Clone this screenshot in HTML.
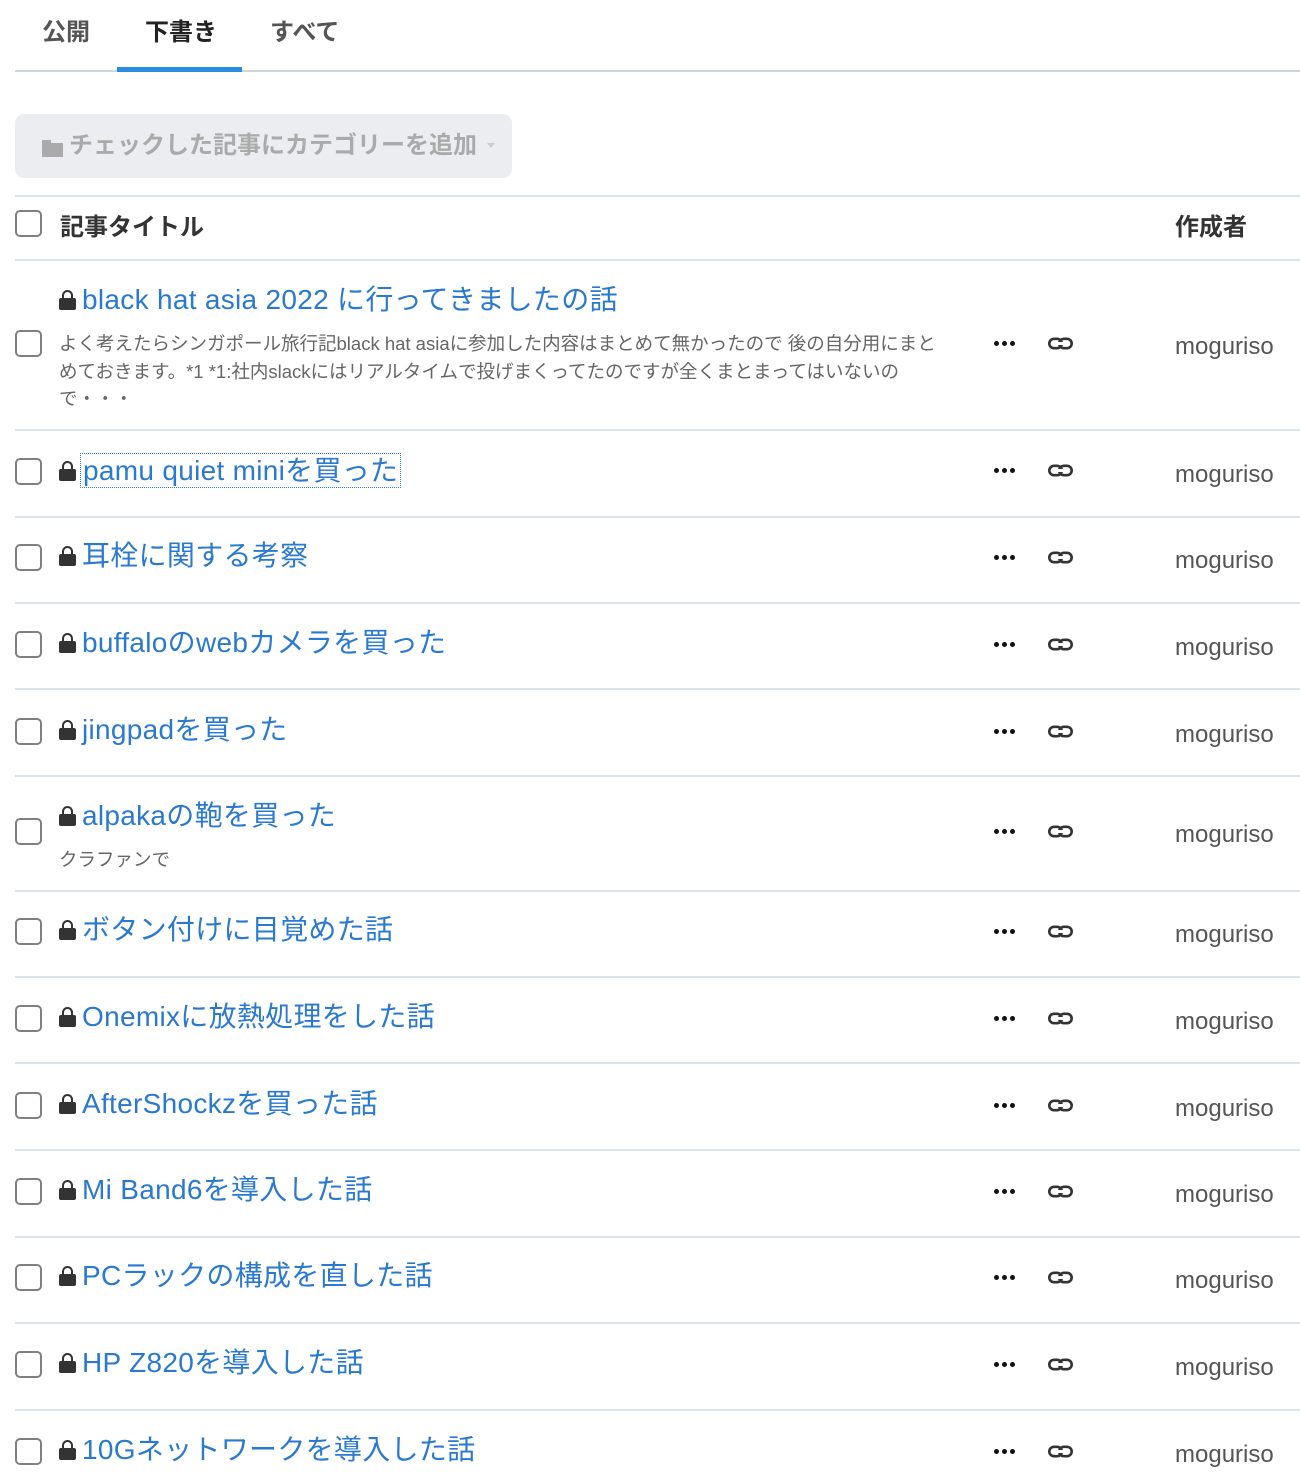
<!DOCTYPE html>
<html><head><meta charset="utf-8"><style>
*{margin:0;padding:0;box-sizing:border-box}
body{width:1300px;height:1482px;background:#fff;position:relative;overflow:hidden;font-family:"Liberation Sans","Noto Sans CJK JP",sans-serif;}
.a{position:absolute;white-space:nowrap}
.tab{font-size:24px;font-weight:bold;color:#555;top:17px;line-height:32px}
.sep{position:absolute;left:15px;width:1285px;height:2px;background:#dde3ea}
.cb{position:absolute;left:15px;width:27px;height:27px;border:2px solid #808080;border-radius:5px;background:#fff}
.t{position:absolute;left:59px;font-size:28px;line-height:36px;color:#2a79d0;white-space:nowrap;letter-spacing:0.3px}
.lk{display:inline-block;width:17px;height:20px;position:relative;margin-right:6px;vertical-align:-1px}
.lk:before{content:"";position:absolute;left:3px;top:0;width:7px;height:9px;border:2.5px solid #333;border-bottom:none;border-radius:6px 6px 0 0}
.lk:after{content:"";position:absolute;left:0;top:8px;width:17px;height:12px;background:#333;border-radius:2px}
.dots{position:absolute;left:994px;width:24px;height:6px}
.dots i{position:absolute;top:0;width:5px;height:5px;border-radius:50%;background:#111}
.link{position:absolute;left:1048px;width:25px;height:13px}
.au{position:absolute;left:1175px;font-size:24px;line-height:30px;color:#555}
.d{position:absolute;left:59px;font-size:18.5px;line-height:27.5px;color:#666;white-space:nowrap}
</style></head><body>
<div class="a tab" style="left:42px">公開</div>
<div class="a tab" style="left:145px;color:#222">下書き</div>
<div class="a tab" style="left:270px">すべて</div>
<div class="sep" style="top:70px;height:2px;background:#cfd6de"></div>
<div class="a" style="left:117px;top:67px;width:125px;height:5px;background:#2a8be0"></div>
<div class="a" style="left:15px;top:114px;width:497px;height:64px;background:#ebedf0;border-radius:9px"></div>
<div class="a" style="left:42px;top:140px;width:21px;height:17px;"><div style="position:absolute;left:0;top:0;width:9px;height:4px;background:#aaa;border-radius:1px"></div><div style="position:absolute;left:0;top:3px;width:21px;height:14px;background:#aaa"></div></div>
<div class="a" style="left:69px;top:129px;font-size:24px;line-height:34px;color:#aaa;font-weight:bold">チェックした記事にカテゴリーを追加</div>
<div class="a" style="left:487px;top:143px;width:0;height:0;border-left:4px solid transparent;border-right:4px solid transparent;border-top:5px solid #ccc"></div>
<div class="sep" style="top:195px"></div>
<div class="cb" style="top:210px"></div>
<div class="a" style="left:60px;top:212px;font-size:24px;line-height:32px;font-weight:bold;color:#333">記事タイトル</div>
<div class="a" style="left:1175px;top:212px;font-size:24px;line-height:32px;font-weight:bold;color:#333">作成者</div>
<div class="sep" style="top:259px"></div>

<div id="rows"></div>
<script>
const rows=[
[430,300,343,344,347,"black hat asia 2022 に行ってきましたの話",["よく考えたらシンガポール旅行記black hat asiaに参加した内容はまとめて無かったので 後の自分用にまと","めておきます。*1 *1:社内slackにはリアルタイムで投げまくってたのですが全くまとまってはいないの","で・・・"]],
[517,471,471,471,475,"pamu quiet miniを買った"],
[603,556,557,558,561,"耳栓に関する考察"],
[689,643,644,645,648,"buffaloのwebカメラを買った"],
[776,730,731,732,735,"jingpadを買った"],
[891,816,831,832,835,"alpakaの鞄を買った",["クラファンで"]],
[977,930,931,932,935,"ボタン付けに目覚めた話"],
[1063,1017,1018,1019,1022,"Onemixに放熱処理をした話"],
[1150,1104,1105,1106,1109,"AfterShockzを買った話"],
[1237,1190,1191,1192,1195,"Mi Band6を導入した話"],
[1323,1276,1277,1278,1281,"PCラックの構成を直した話"],
[1410,1363,1364,1365,1368,"HP Z820を導入した話"],
[null,1450,1451,1452,1455,"10Gネットワークを導入した話"]];
let h="";
rows.forEach((r,i)=>{
 if(r[0])h+=`<div class="sep" style="top:${r[0]-1}px"></div>`;
 h+=`<div class="cb" style="top:${r[2]-13}px"></div>`;
 let t=`<span class="lk"></span>${r[5]}`;
 if(i==1)t=`<span class="lk"></span><span style="outline:1px dotted #2a79d0;outline-offset:1px;padding:0 1px">${r[5]}</span>`;
 h+=`<div class="t" style="top:${r[1]-18}px">${t}</div>`;
 if(r[6])r[6].forEach((l,j)=>{h+=`<div class="d" style="top:${(i==0?344:860)+j*27.5-14}px">${l}</div>`});
 h+=`<div class="dots" style="top:${r[3]-3}px"><i style="left:0"></i><i style="left:8px"></i><i style="left:16px"></i></div>`;
 h+=`<svg class="link" style="top:${r[3]-7}px" viewBox="0 0 25 13"><rect x="1.3" y="1.8" width="12.5" height="9.4" rx="4.7" fill="none" stroke="#333" stroke-width="2.6"/><rect x="11.2" y="1.8" width="12.5" height="9.4" rx="4.7" fill="none" stroke="#333" stroke-width="2.6"/><rect x="8.5" y="5" width="8" height="3" fill="#fff"/></svg>`;
 h+=`<div class="au" style="top:${r[4]-15}px">moguriso</div>`;
});
document.getElementById("rows").innerHTML=h;
</script>
</body></html>
